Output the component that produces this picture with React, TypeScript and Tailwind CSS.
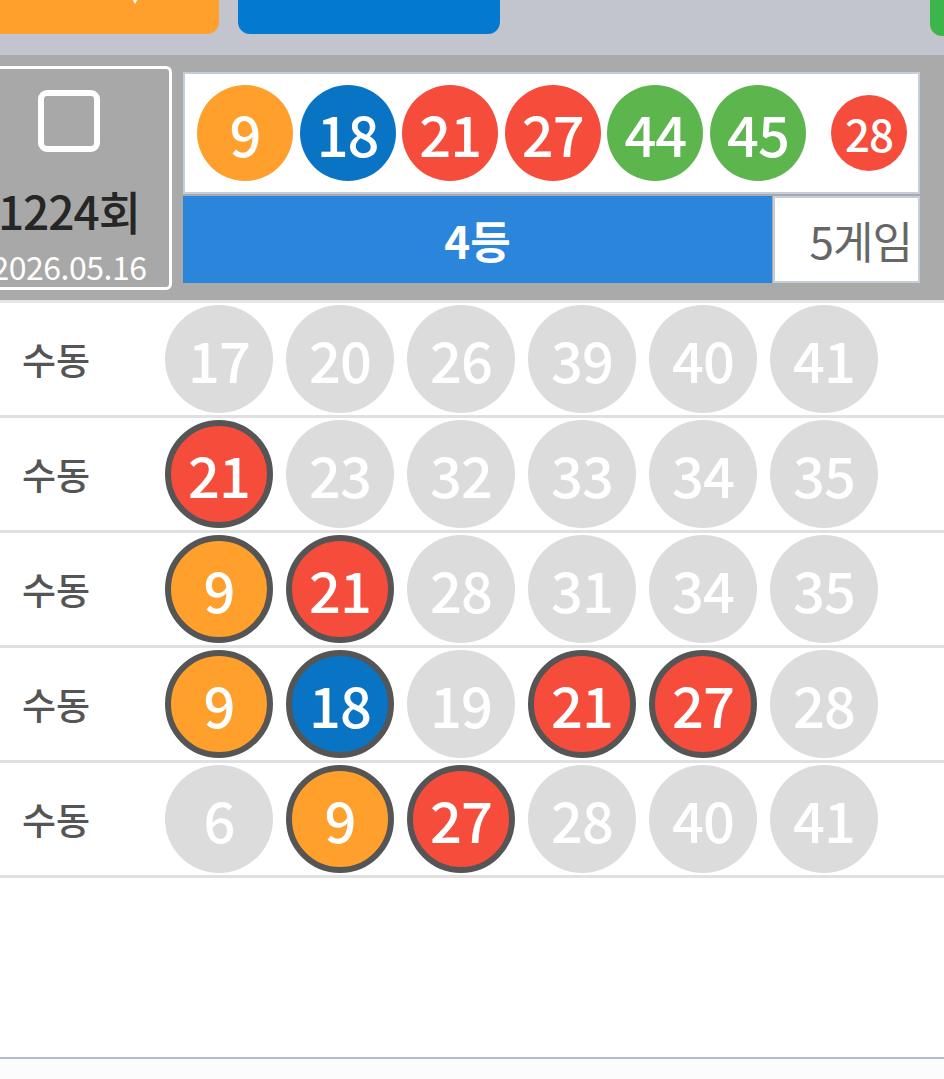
import React from "react";

type Game = { label: string; nums: number[] };

const WIN = [9, 18, 21, 27, 44, 45];
const BONUS = 28;

const GAMES: Game[] = [
  { label: "수동", nums: [17, 20, 26, 39, 40, 41] },
  { label: "수동", nums: [21, 23, 32, 33, 34, 35] },
  { label: "수동", nums: [9, 21, 28, 31, 34, 35] },
  { label: "수동", nums: [9, 18, 19, 21, 27, 28] },
  { label: "수동", nums: [6, 9, 27, 28, 40, 41] },
];

function ballColor(n: number) {
  if (n <= 10) return "bg-[#ffa02c]";
  if (n <= 20) return "bg-[#0a74c4]";
  if (n <= 30) return "bg-[#f54c3b]";
  if (n <= 40) return "bg-[#a9a9a9]";
  return "bg-[#5db54e]";
}

function TopBall({ n }: { n: number }) {
  return (
    <div
      className={`w-[96px] h-[96px] rounded-full flex items-center justify-center text-white text-[56px] font-medium leading-none tracking-[-1px] ${ballColor(n)}`}
    >
      {n}
    </div>
  );
}

function RowBall({ n }: { n: number }) {
  const hit = WIN.includes(n);
  return (
    <div
      className={`w-[108px] h-[108px] rounded-full flex items-center justify-center text-white text-[56px] font-medium leading-none tracking-[-1px] ${
        hit ? `${ballColor(n)} border-[6px] border-[#555555]` : "bg-[#dcdcdc]"
      }`}
    >
      {n}
    </div>
  );
}

export default function App() {
  return (
    <div className="w-[944px] h-[1079px] overflow-hidden bg-white font-['Noto_Sans_CJK_KR','Noto_Sans',sans-serif]">
      {/* top button bar */}
      <div className="h-[55px] bg-[#c2c5cd] flex items-start overflow-hidden">
        <div className="relative w-[239px] h-[60px] -mt-[26px] -ml-[20px] bg-[#ff9f2c] rounded-[12px] shrink-0">
          <svg
            className="absolute left-[148px] top-[18px]"
            width="14"
            height="14"
            viewBox="0 0 14 14"
          >
            <path d="M2 3 L7 12 L12 3" fill="white" />
          </svg>
        </div>
        <div className="w-[262px] h-[60px] -mt-[26px] ml-[19px] bg-[#037ad0] rounded-[12px] shrink-0" />
        <div className="w-[60px] h-[62px] -mt-[26px] ml-auto -mr-[46px] bg-[#3db54a] rounded-[12px] shrink-0" />
      </div>

      {/* draw summary */}
      <div className="h-[245px] bg-[#aaaaaa] flex items-start">
        <div className="w-[206px] h-[224px] mt-[11px] -ml-[34px] border-[3px] border-white rounded-[6px] bg-[#a8a8a8] flex flex-col items-center shrink-0">
          <div className="mt-[21px] w-[62px] h-[62px] border-[6px] border-white rounded-[9px]" />
          <div className="mt-[33px] h-[50px] flex items-center text-[46px] leading-[50px] font-medium text-[#262626] tracking-[-1px]">
            1224회
          </div>
          <div className="mt-[14px] h-[34px] flex items-center text-[32px] leading-[34px] text-white tracking-[-0.5px]">
            2026.05.16
          </div>
        </div>

        <div className="ml-[11px] mt-[17px] w-[737px] flex flex-col">
          <div className="h-[122px] bg-white border-2 border-[#c5ccda] flex items-center pl-[12px]">
            <div className="flex gap-[6.6px]">
              {WIN.map((n) => (
                <TopBall key={n} n={n} />
              ))}
            </div>
            <div className="ml-[25px] w-[76px] h-[76px] rounded-full bg-[#f54c3b] flex items-center justify-center text-white text-[44px] font-medium leading-none tracking-[-1px]">
              {BONUS}
            </div>
          </div>
          <div className="mt-[2px] h-[87px] flex">
            <div className="w-[589px] bg-[#2a85db] flex items-center justify-center text-white text-[44px] font-bold leading-none">
              4등
            </div>
            <div className="flex-1 ml-[1px] bg-white border-2 border-[#c5ccda] flex items-center justify-end pr-[6px] text-[44px] text-[#666666] leading-none tracking-[-1px]">
              5게임
            </div>
          </div>
        </div>
      </div>

      {/* games */}
      <div className="border-t-[3px] border-[#e6e6e6]">
        {GAMES.map((g, i) => (
          <div
            key={i}
            className="h-[115px] border-b-[3px] border-[#e0e0e0] flex items-center pl-[22px]"
          >
            <div className="w-[143px] text-[37px] font-medium text-[#555555] leading-none">
              {g.label}
            </div>
            <div className="flex gap-[13px]">
              {g.nums.map((n) => (
                <RowBall key={n} n={n} />
              ))}
            </div>
          </div>
        ))}
      </div>

      <div className="h-[179px] bg-white" />
      <div className="h-[2px] bg-[#b3bdca]" />
      <div className="h-[30px] bg-[#fcfcfd]" />
    </div>
  );
}
